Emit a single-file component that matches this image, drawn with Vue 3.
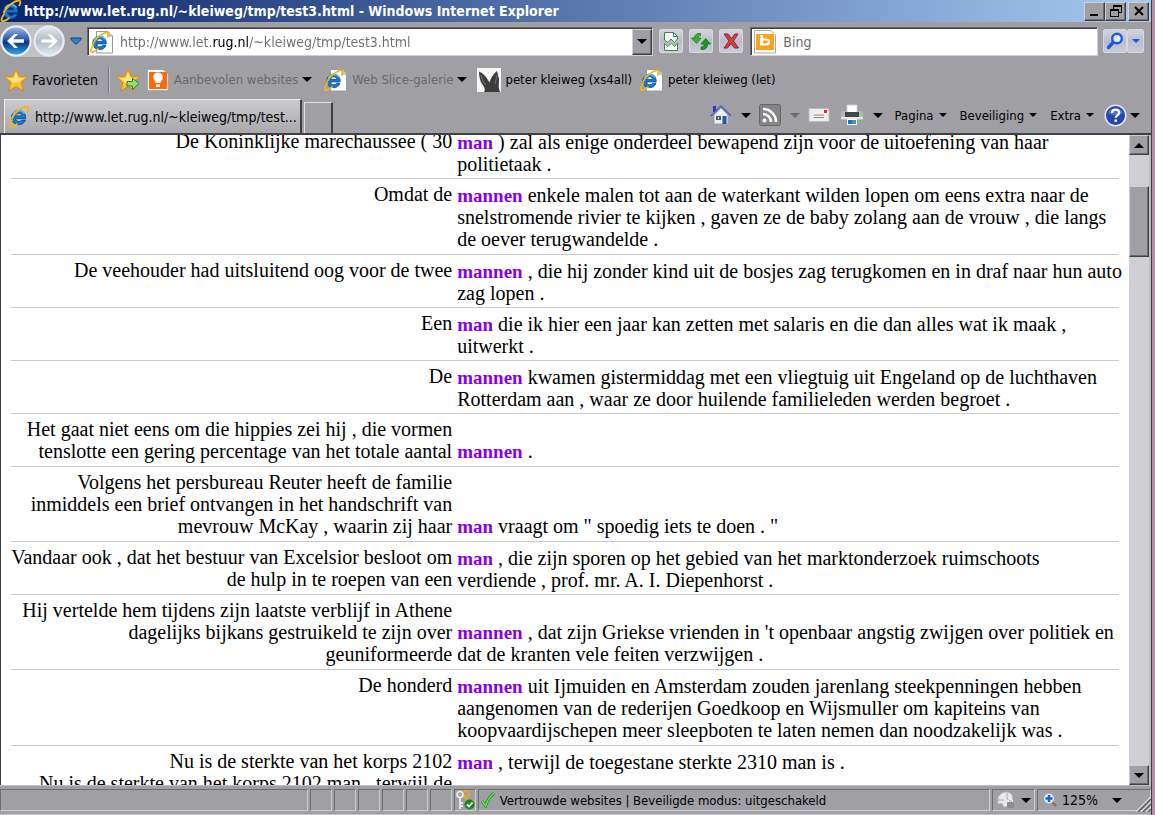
<script setup>
import { h } from 'vue'

const rows = [
  { left: ['De Koninklijke marechaussee ( 30'], key: 'man', right: [') zal als enige onderdeel bewapend zijn voor de uitoefening van haar', 'politietaak .'] },
  { kind: 'tall', left: ['Omdat de'], key: 'mannen', right: ['enkele malen tot aan de waterkant wilden lopen om eens extra naar de', 'snelstromende rivier te kijken , gaven ze de baby zolang aan de vrouw , die langs', 'de oever terugwandelde .'] },
  { left: ['De veehouder had uitsluitend oog voor de twee'], key: 'mannen', right: [', die hij zonder kind uit de bosjes zag terugkomen en in draf naar hun auto', 'zag lopen .'] },
  { left: ['Een'], key: 'man', right: ['die ik hier een jaar kan zetten met salaris en die dan alles wat ik maak ,', 'uitwerkt .'] },
  { left: ['De'], key: 'mannen', right: ['kwamen gistermiddag met een vliegtuig uit Engeland op de luchthaven', 'Rotterdam aan , waar ze door huilende familieleden werden begroet .'] },
  { kind: 'end', left: ['Het gaat niet eens om die hippies zei hij , die vormen', 'tenslotte een gering percentage van het totale aantal'], key: 'mannen', right: ['.'] },
  { kind: 'end', left: ['Volgens het persbureau Reuter heeft de familie', 'inmiddels een brief ontvangen in het handschrift van', 'mevrouw McKay , waarin zij haar'], key: 'man', right: ['vraagt om " spoedig iets te doen . "'] },
  { left: ['Vandaar ook , dat het bestuur van Excelsior besloot om', 'de hulp in te roepen van een'], key: 'man', right: [', die zijn sporen op het gebied van het marktonderzoek ruimschoots', 'verdiende , prof. mr. A. I. Diepenhorst .'] },
  { kind: 'end', left: ['Hij vertelde hem tijdens zijn laatste verblijf in Athene', 'dagelijks bijkans gestruikeld te zijn over', 'geuniformeerde'], key: 'mannen', right: [", dat zijn Griekse vrienden in 't openbaar angstig zwijgen over politiek en", 'dat de kranten vele feiten verzwijgen .'] },
  { kind: 'tall', left: ['De honderd'], key: 'mannen', right: ['uit Ijmuiden en Amsterdam zouden jarenlang steekpenningen hebben', 'aangenomen van de rederijen Goedkoop en Wijsmuller om kapiteins van', 'koopvaardijschepen meer sleepboten te laten nemen dan noodzakelijk was .'] },
  { left: ['Nu is de sterkte van het korps 2102', 'Nu is de sterkte van het korps 2102 man , terwijl de'], key: 'man', right: [', terwijl de toegestane sterkte 2310 man is .'] },
]

const IeGlyph = () => [
  h('path', { d: 'M18.6 13.6H8.6c.2 2 1.600 3 3.300 3 1.400 0 2.400-.5 3-1.500h3.500c-1 2.900-3.500 4.600-6.600 4.600-4.200 0-7.300-2.900-7.300-7.200 0-4.200 3.200-7.100 7.300-7.100 4.500 0 7.100 3.300 6.800 8.200zM8.700 10.900h6.300c-.2-1.700-1.400-2.700-3.100-2.700s-2.900 1-3.200 2.700z', fill: '#1878cc', stroke: '#0b4d98', 'stroke-width': '.9' }),
  h('path', { d: 'M6 9.500c1-2.300 3-3.800 5.800-3.800 2.500 0 4.600 1 5.800 3', fill: 'none', stroke: '#62c4f4', 'stroke-width': '1.300' }),
  h('path', { d: 'M5.500 14.500C2.200 19 1.500 22.400 4.200 22.200c2-.2 4.300-1.700 6.300-3.600M4.500 14c2-4.300 6.500-8.900 11.500-11.400 3.500-1.700 6-1.500 5.200 1.600-.2.900-.7 1.900-1.300 2.900', fill: 'none', stroke: '#f3b421', 'stroke-width': '1.800' }),
]
const IeIcon = () => h('svg', { viewBox: '1 1 22 22', width: 22, height: 22 }, IeGlyph())
const IePage = () => h('svg', { viewBox: '0 0 24 24', width: 24, height: 24 }, [
  h('path', { d: 'M6.500 1.500H18l4.500 4.500v17H6.500z', fill: '#fff', stroke: '#9a9a9a' }),
  h('path', { d: 'M18 1.500V6h4.500', fill: '#ddd', stroke: '#9a9a9a' }),
  h('g', { transform: 'translate(-1.500 1) scale(.95)' }, IeGlyph()),
])
const Arrow = (p) => h('svg', { viewBox: '0 0 10 5', width: p.w || 10, height: (p.w || 10) / 2, class: 'arrow' }, [
  h('path', { d: 'M0 0h10L5 5z', fill: p.color || '#000' }),
])
Arrow.props = ['w', 'color']
const Star = () => [
  h('path', { d: 'M12 .8l3.200 7.500 8.300.8-6.300 5.400 2 8.300-7.200-4.400-7.200 4.400 2-8.300L.5 9.100l8.300-.8z', fill: '#fdc02a', stroke: '#d98c12', 'stroke-linejoin': 'round' }),
  h('path', { d: 'M12 4l2.200 5.700 5.800.5-4.500 3.500L8 15l.4-1.300L4 10.200l5.800-.5z', fill: '#ffe386' }),
]
</script>

<template>
  <div class="desktop">
    <div class="window">
      <header class="title">
        <IeIcon />
        <h1>http://www.let.rug.nl/~kleiweg/tmp/test3.html - Windows Internet Explorer</h1>
        <div class="caption">
          <button aria-label="Minimaliseren"><svg width="18" height="16" viewBox="0 0 18 16"><path d="M4 11h8v2H4z" /></svg></button>
          <button aria-label="Verkleinen"><svg width="18" height="16" viewBox="0 0 18 16"><path d="M6 2h9v8h-3V9h2V4H7v2H6zM3 6h9v8H3zm1 2v5h7V8z" fill-rule="evenodd" /></svg></button>
          <button class="close" aria-label="Sluiten"><svg width="18" height="16" viewBox="0 0 18 16"><path d="M5 4l8 8M13 4l-8 8" stroke="#000" stroke-width="2" /></svg></button>
        </div>
      </header>

      <nav class="bar address-bar">
        <div class="travel">
          <button aria-label="Vorige">
            <svg width="32" height="32" viewBox="0 0 32 32">
              <defs>
                <linearGradient id="blue" x2="0" y2="1"><stop offset="0" stop-color="#a5bce8" /><stop offset=".45" stop-color="#2857ad" /><stop offset=".55" stop-color="#0c3488" /><stop offset="1" stop-color="#32b4f4" /></linearGradient>
                <linearGradient id="pale" x2="0" y2="1"><stop offset="0" stop-color="#e2e7ec" /><stop offset=".5" stop-color="#b0bdc9" /><stop offset="1" stop-color="#dcecf3" /></linearGradient>
              </defs>
              <circle cx="16" cy="16" r="14.500" fill="url(#blue)" stroke="#e9edf2" stroke-width="2" />
              <path d="M7 16l7.500-7h3.500l-5 5.200h11v3.600H13l5 5.200h-3.500z" fill="#fff" />
            </svg>
          </button>
          <button aria-label="Volgende">
            <svg width="32" height="32" viewBox="0 0 32 32">
              <circle cx="16" cy="16" r="14.500" fill="url(#pale)" stroke="#e9edf2" stroke-width="2" />
              <path d="M25 16l-7.500-7H14l5 5.200H8v3.600h11L14 23h3.500z" fill="#fff" stroke="#c3ccd4" stroke-width=".6" />
            </svg>
          </button>
        </div>
        <button class="recent" aria-label="Recente pagina's"><svg width="12" height="8" viewBox="0 0 12 8"><path d="M1 1h10v1.500L6.500 7h-1L1 2.500z" fill="#2f7fd0" stroke="#153f7c" /></svg></button>
        <div class="field url">
          <IePage />
          <input aria-label="Adres" value="http://www.let.rug.nl/~kleiweg/tmp/test3.html">
          <button class="raised drop" aria-label="Adressen tonen"><Arrow /></button>
        </div>
        <div class="page-buttons">
          <button class="glass" aria-label="Compatibiliteitsweergave">
            <svg width="20" height="22" viewBox="0 0 20 22"><path d="M3.500 10V2.500h9l4 4V9l-3 3.500-3.500-3.500L7 12.500zM3.500 13.500L7 16.500l3.500-3.500 3 3.500 3-3.500v7.500h-13z" fill="#fff" stroke="#2d9139" /><path d="M12.500 2.500v4h4" fill="none" stroke="#2d9139" /></svg>
          </button>
          <button class="glass" aria-label="Vernieuwen">
            <svg width="22" height="22" viewBox="0 0 22 22"><path d="M10.500 3.500C6.500 3.200 4.500 5 4.500 8H1.500l5 5.500L11 8H8c.2-1.700 1-2.500 2.500-2.500z" fill="#2eb52c" stroke="#127a1b" stroke-width=".7" /><path d="M11 19.500c4.500.3 6.500-1.500 6.500-5.500H20.500l-4.800-5.500L11 14h3c0 2.300-1 3-3 3z" fill="#1f961f" stroke="#0f6a18" stroke-width=".7" /></svg>
          </button>
          <button class="glass" aria-label="Stoppen">
            <svg width="22" height="22" viewBox="0 0 22 22"><path d="M4 4h4l3.500 4.500L15 4h3l-4.500 7 5 7h-4l-3.500-4.500L7.500 18H4l5-7z" fill="#cf4148" stroke="#96232c" /></svg>
          </button>
        </div>
        <div class="field search">
          <svg width="24" height="24" viewBox="0 0 24 24"><path d="M1.500.5H18l4.500 4.500v18h-21z" fill="#fff" stroke="#aaa" /><path d="M3 4h18v16H3z" fill="#faa21b" /><path d="M7 6h2v8M8 9.500h5q3 0 3 2.500t-3 2.500H8z" fill="none" stroke="#fff" stroke-width="2.200" /></svg>
          <input class="query" aria-label="Zoeken" placeholder="Bing">
        </div>
        <div class="go">
          <button class="glass" aria-label="Zoek"><svg width="22" height="22" viewBox="0 0 22 22"><circle cx="13" cy="8.500" r="4.800" fill="#dcecff" stroke="#2058e0" stroke-width="2.400" /><path d="M9 12.500l-4.500 5" stroke="#2058e0" stroke-width="3.400" stroke-linecap="round" /></svg></button>
          <button class="glass narrow" aria-label="Zoekopties"><Arrow :w="8" color="#1558f0" /></button>
        </div>
      </nav>

      <nav class="bar favorites">
        <button class="fav"><svg width="24" height="24" viewBox="0 0 24 24"><Star /></svg>Favorieten</button>
        <i class="divider"></i>
        <button class="add" aria-label="Toevoegen aan werkbalk Favorieten"><svg width="24" height="24" viewBox="0 0 24 24"><Star /><path d="M11 13.500h5.500V10l6.500 5.500-6.500 6V18H11z" fill="#8ce272" stroke="#21882a" /></svg></button>
        <button class="item sites dim"><svg width="24" height="24" viewBox="0 0 24 24"><path d="M1.500 1.500H17l5 4.500v16.500H1.500z" fill="#fff" stroke="#aaa" /><path d="M3 4h18v17H3z" fill="#fa6a0a" /><path d="M9.500 15c0-2.500-2.300-3-2.300-5.800a4.800 4.800 0 019.600 0c0 2.800-2.300 3.300-2.300 5.800zM10 16.500h4V19h-4z" fill="#fff" /></svg><span>Aanbevolen websites</span><Arrow /></button>
        <button class="item slice dim"><IePage /><span>Web Slice-galerie</span><Arrow /></button>
        <a class="item xs" href="#"><svg width="24" height="24" viewBox="0 0 24 24"><path d="M0 0h24v24H0z" fill="#f6f6f4" /><path d="M2 3.500C6 5 9.500 9 12.500 14.500 14 10 16 6 20 3l2 8c0 5-1 8 1 13H7c2-3 0-5-2-8S2 8 2 3.500z" fill="#3b3d3c" /><path d="M4 7q1 6 5 10M20 7l-2 9" stroke="#666866" stroke-width="1.300" fill="none" /></svg><span>peter kleiweg (xs4all)</span></a>
        <a class="item" href="#"><IePage /><span>peter kleiweg (let)</span></a>
      </nav>

      <div class="tabs">
        <button class="tab"><IeIcon />http://www.let.rug.nl/~kleiweg/tmp/test...</button>
        <button class="new-tab" aria-label="Nieuw tabblad"></button>
        <div class="commands">
          <button aria-label="Startpagina">
            <svg width="22" height="22" viewBox="0 0 22 22"><path d="M3 2h3v6H3z" fill="#2b35b8" /><path d="M4 11l7-7 7 7v9H4z" fill="#e8eef8" stroke="#8ea0bd" /><path d="M1 12L11 2l10 10" fill="none" stroke="#4a63c6" stroke-width="1.500" /><path d="M6 12h5v4H6z" fill="#55565a" /><path d="M8 13h1v2H8z" fill="#fff" /><path d="M12.500 12h4v8h-4z" fill="#215a9c" /></svg>
            <Arrow />
          </button>
          <button class="feed" aria-label="Feeds">
            <svg width="22" height="22" viewBox="0 0 22 22"><rect x=".5" y=".5" width="21" height="21" rx="2" fill="#858585" stroke="#666" /><circle cx="5.500" cy="16.500" r="2" fill="#fff" /><path d="M4 10a8 8 0 018 8M4 5a13 13 0 0113 13" fill="none" stroke="#fff" stroke-width="2.600" /></svg>
            <Arrow color="#6c6b70" />
          </button>
          <button aria-label="E-mail lezen"><svg width="22" height="16" viewBox="0 0 22 16"><path d="M1 1.500h20v13H1z" fill="#efefef" stroke="#bdbdbd" /><path d="M16 3h3v3h-3z" fill="#e22" /><path d="M6 8h10M6 10.500h10" stroke="#888" /></svg></button>
          <button class="print" aria-label="Afdrukken">
            <svg width="24" height="22" viewBox="0 0 24 22"><path d="M7 1h10v8H7z" fill="#fff" stroke="#ccc" /><path d="M1 9q0-2 2-2h3v2h12V7h3q2 0 2 2v7H1z" fill="#b5b7ba" /><path d="M5 8h14v5H5z" fill="#454649" /><path d="M1 13h22v2H1z" fill="#e8e8e8" /><path d="M19 11h3v2h-3z" fill="#72e660" /><path d="M7 15h10v6H7z" fill="#fff" /><path d="M8 16h4v4H8z" fill="#1874c8" /><path d="M12 16h4v4h-4z" fill="#29a5a0" /></svg>
            <Arrow />
          </button>
          <button class="menu">Pagina<Arrow :w="8" /></button>
          <button class="menu">Beveiliging<Arrow :w="8" /></button>
          <button class="menu">Extra<Arrow :w="8" /></button>
          <button class="help" aria-label="Help">
            <svg width="23" height="23" viewBox="0 0 23 23"><circle cx="11.500" cy="11.500" r="10.300" fill="#2249ad" stroke="#e4e8f2" stroke-width="1.500" /><path d="M4 9a8 7 0 0115 0c-4 3-11 3-15 0z" fill="#5f86d8" opacity=".7" /><path d="M8 9c0-2 1.500-3.300 3.600-3.300S15.200 7 15.200 8.800c0 2.500-3.500 2.400-3.500 5" fill="none" stroke="#fff" stroke-width="2.200" /><path d="M10.500 15.500h2.400v2.400h-2.400z" fill="#fff" /></svg>
            <Arrow />
          </button>
        </div>
      </div>

      <div class="viewport">
        <main class="page">
          <table>
            <tbody>
              <tr v-for="(r, i) in rows" :key="i" :class="r.kind">
                <td class="before"><span v-for="(l, j) in r.left" :key="j" class="line">{{ l }}</span></td>
                <td class="after"><span v-for="(l, j) in r.right" :key="j" class="line"><template v-if="j === 0"><b>{{ r.key }}</b>{{ ' ' }}</template>{{ l }}</span></td>
              </tr>
            </tbody>
          </table>
        </main>
        <div class="scrollbar">
          <button class="raised" aria-label="Omhoog"><Arrow class="up" /></button>
          <div class="track"><div class="raised thumb"></div></div>
          <button class="raised" aria-label="Omlaag"><Arrow /></button>
        </div>
      </div>

      <footer class="status">
        <div class="panel first"></div>
        <div v-for="n in 6" :key="n" class="panel small"></div>
        <div class="panel small">
          <svg width="20" height="20" viewBox="0 0 20 20"><circle cx="11" cy="4" r="3" fill="none" stroke="#e8a32a" stroke-width="2" /><path d="M11 7l3 7" stroke="#e8a32a" stroke-width="2" /><circle cx="5" cy="4.500" r="3" fill="#aaa" stroke="#eee" stroke-width="1.600" /><path d="M5 8v11M6 16h2M6 13h2" stroke="#e4e4e4" stroke-width="2" /><circle cx="14.500" cy="14.500" r="5" fill="#16861d" /><path d="M12 14.500l2 2 3.500-4" fill="none" stroke="#fff" stroke-width="1.800" /></svg>
        </div>
        <div class="panel zone">
          <svg width="14" height="16" viewBox="0 0 14 16"><path d="M1 9l3.500 5Q7 6 13 1" fill="none" stroke="#1f9a24" stroke-width="3" /><path d="M1 9l3.500 5Q7 6 13 1" fill="none" stroke="#66dd55" stroke-width="1.500" /></svg>
          Vertrouwde websites | Beveiligde modus: uitgeschakeld
        </div>
        <button class="panel filter" aria-label="InPrivate-filtering">
          <svg width="20" height="18" viewBox="0 0 20 18"><path d="M2 10a8 8 0 0114-6l1 9-9 3-2-4-4 1z" fill="#e9e9e9" stroke="#c3c3c3" /><path d="M11 2v6l5 3M1 9h7" stroke="#aaa" fill="none" /><rect x="11" y="11" width="7" height="6" fill="#8f8f92" /><path d="M12.500 11V9q2-3 4 0v2" fill="none" stroke="#eee" /></svg>
          <Arrow />
        </button>
        <button class="panel zoom">
          <svg width="14" height="14" viewBox="0 0 14 14"><path d="M9 9l4 4" stroke="#a86b39" stroke-width="2.400" /><circle cx="6" cy="5.500" r="5" fill="#d5ecff" /><path d="M6 2v7M2.500 5.500h7" stroke="#1767c8" stroke-width="2.400" /></svg>
          <span>125%</span><Arrow />
        </button>
        <svg class="grip" width="16" height="16" viewBox="0 0 16 16"><path d="M1 16L16 1M6 16L16 6M11 16l5-5" stroke="#dcdce0" stroke-width="1.500" /><path d="M3 16L16 3M8 16l8-8M13 16l3-3" stroke="#5d5c61" stroke-width="1.500" /></svg>
      </footer>
    </div>
  </div>
</template>

<style>
html, body, #app { height: 100%; }
body { margin: 0; overflow: hidden; }
</style>

<style scoped>
* { box-sizing: border-box; }
.desktop { height: 100%; background: #b98ca6; padding-right: 3px; font: 14px "DejaVu Sans Condensed", "Noto Sans", sans-serif; color: #000; }
.window { height: 100%; display: flex; flex-direction: column; background: #a09fa4; border-right: 1px solid #3d3c40; }
button { font: inherit; color: inherit; background: none; border: 0; padding: 0; margin: 0; display: flex; align-items: center; justify-content: center; white-space: nowrap; }
a { color: inherit; text-decoration: none; }
svg { display: block; flex: none; }
.title { height: 22px; flex: none; display: flex; align-items: center; gap: 2px; background: linear-gradient(90deg, #0a246a, #a6caf0); }
.title h1 { flex: 1; margin: 0; font-size: 14px; font-weight: bold; line-height: 22px; color: #fff; white-space: nowrap; }
.caption { display: flex; padding-right: 2px; }
.caption button, .raised { background: #a09fa4; border: 1px solid; border-color: #d0cfd3 #404044 #404044 #d0cfd3; box-shadow: inset -1px -1px #6d6c71; }
.caption button { width: 21px; height: 19px; }
.caption .close { margin-left: 2px; }
.bar { display: flex; align-items: center; flex: none; }
.address-bar { height: 38px; padding-right: 7px; }
.travel { display: flex; gap: 1px; border-radius: 16px; background: #c2c2c6; }
.recent { width: 22px; height: 24px; }
.field { display: flex; align-items: center; height: 29px; background: #fff; border: 1px solid; border-color: #68676c #d0cfd3 #d0cfd3 #68676c; box-shadow: inset 1px 1px #403f43; padding: 1px 0 0 2px; }
.field input { font: inherit; flex: 1; min-width: 0; width: 0; border: 0; padding: 0 0 0 6px; background: none; outline: 0; height: 24px; }
.url { flex: 566; }
.url input { color: transparent; background: linear-gradient(90deg, #6d6d6d 99px, #000 99px, #000 135px, #6d6d6d 135px); background-clip: text; -webkit-background-clip: text; }
.search { flex: 346; margin-left: 7px; }
.query::placeholder { color: #6d6d6d; opacity: 1; }
.drop { width: 20px; height: 26px; }
.page-buttons { display: flex; gap: 6px; margin-left: 6px; }
.glass { width: 24px; height: 24px; border: 1px solid #d7d8de; border-radius: 2px; background: linear-gradient(#d3d5e0, #bbbcca 50%, #c9cbdb); }
.narrow { width: 17px; }
.go { display: flex; margin-left: 5px; }
.favorites { height: 39px; padding-left: 4px; font-size: 13px; }
.fav { gap: 4px; width: 93px; justify-content: flex-start; font-size: 14px; }
.divider { width: 2px; height: 26px; margin: 0 6px 0 11px; background: #77767b; border-right: 1px solid #c3c2c7; }
.add { margin-right: 6px; }
.item { display: flex; align-items: center; gap: 4px; white-space: nowrap; }
.dim span { color: #69686d; }
.sites { margin-right: 12px; }
.slice { margin-right: 10px; }
.xs { margin-right: 8px; }
.tabs { display: flex; height: 36px; flex: none; padding-left: 4px; border-bottom: 2px solid #404044; align-items: flex-end; }
.tab { flex: none; width: 298px; height: 34px; justify-content: flex-start; padding-left: 3px; gap: 5px; background: linear-gradient(#cbcbcd, #a9a8ad); border: 1px solid; border-color: #ececee #404044 #a9a8ad #ececee; border-width: 1px 2px 0 1px; }
.new-tab { width: 29px; height: 31px; margin-left: 2px; border: 1px solid; border-color: #e2e2e4 #404044 #a09fa4 #e2e2e4; border-width: 1px 2px 0 1px; }
.commands { flex: 1; height: 36px; display: flex; align-items: center; justify-content: flex-end; padding-right: 11px; font-size: 13px; }
.commands button { gap: 9px; margin-right: 8px; }
.commands .print { margin-right: 12px; margin-left: 2px; }
.commands .menu { gap: 5px; margin-right: 13px; }
.commands .help { gap: 3px; margin: 0 0 0 -3px; }
.viewport { flex: 1; min-height: 0; display: flex; background: #fff; border-left: 1px solid #404044; border-right: 2px solid #c0bfc4; }
.page { flex: 1; overflow: hidden; padding: 0 10px; font: 20px/22px "Liberation Serif", "Times New Roman", serif; }
table { width: 100%; margin-top: -9px; border-collapse: collapse; table-layout: fixed; }
td { padding: 4px 0; vertical-align: top; border-bottom: 1px solid #c9c9c9; }
.before { width: 40%; text-align: right; padding-right: 2px; }
.after { padding: 5px 0 3px 3px; }
.tall .after { padding-bottom: 4px; }
.end .after { vertical-align: bottom; padding-bottom: 4px; }
.line { display: block; height: 22px; white-space: nowrap; }
b { font-size: 19px; color: #8a00e6; }
.scrollbar { width: 20px; display: flex; flex-direction: column; background: #cfced2; }
.scrollbar .raised { width: 20px; height: 20px; flex: none; }
.track { flex: 1; padding-top: 31px; }
.scrollbar .thumb { height: 71px; }
.up { transform: rotate(180deg); }
.status { flex: none; display: flex; gap: 2px; height: 30px; padding: 3px 0; position: relative; border-top: 1px solid #c0bfc4; border-bottom: 1px solid #c0bfc4; font-size: 13px; }
.panel { height: 22px; display: flex; align-items: center; border: 1px solid; border-color: #6d6c71 #cfced2 #cfced2 #6d6c71; }
.first { flex: 308; }
.small { width: 22px; flex: none; }
.zone { flex: 512; gap: 5px; padding-left: 2px; white-space: nowrap; }
.filter { width: 43px; gap: 5px; }
.zoom { width: 114px; gap: 5px; justify-content: flex-start; padding-left: 5px; font-size: 14px; }
.zoom .arrow { margin-left: 9px; }
.grip { position: absolute; right: 0; bottom: 2px; }
</style>
